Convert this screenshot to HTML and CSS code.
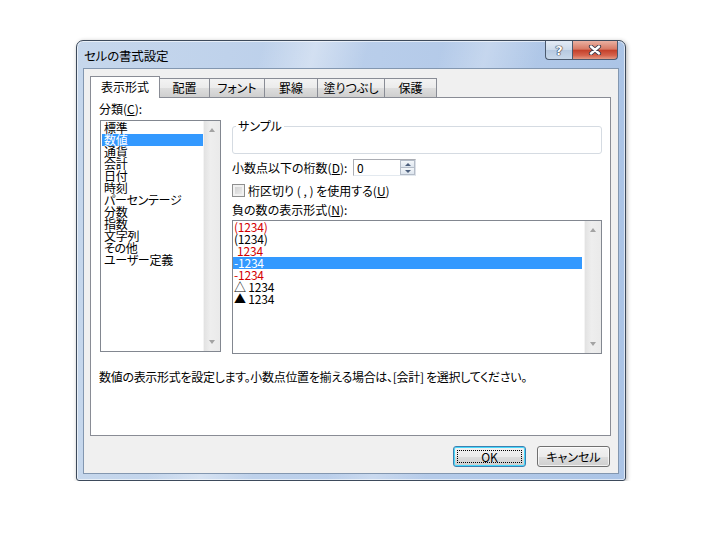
FILE: index.html
```html
<!DOCTYPE html>
<html lang="ja">
<head>
    <meta charset="UTF-8">
    <title>セルの書式設定</title>
    <link rel="stylesheet" href="styles.css">
</head>
<body>
    <div class="window">
        <div class="titlebar">
            <span class="title">セルの書式設定</span>
            <div class="caption-buttons">
                <span class="cap-btn help">?</span>
                <span class="cap-btn close">
                    <svg width="14" height="10" viewBox="0 0 14 10">
                        <path d="M3 1.5 L11 8.5 M11 1.5 L3 8.5" stroke="#3a3a4a" stroke-width="4.2" stroke-linecap="round"/>
                        <path d="M3 1.5 L11 8.5 M11 1.5 L3 8.5" stroke="#fff" stroke-width="2.4" stroke-linecap="round"/>
                    </svg>
                </span>
            </div>
        </div>

        <div class="client">
            <div class="tabs">
                <span class="tab active">表示形式</span>
                <span class="tab">配置</span>
                <span class="tab">フォント</span>
                <span class="tab">罫線</span>
                <span class="tab">塗りつぶし</span>
                <span class="tab">保護</span>
            </div>

            <div class="panel">
                <div class="panel-top">
                    <div class="category">
                        <div class="field-label">分類(<u>C</u>):</div>
                        <div class="listbox cat-list">
                            <ul>
                                <li>標準</li>
                                <li class="selected">数値</li>
                                <li>通貨</li>
                                <li>会計</li>
                                <li>日付</li>
                                <li>時刻</li>
                                <li>パーセンテージ</li>
                                <li>分数</li>
                                <li>指数</li>
                                <li>文字列</li>
                                <li>その他</li>
                                <li>ユーザー定義</li>
                            </ul>
                            <div class="vscroll">
                                <span class="arrow up"></span>
                                <span class="arrow down"></span>
                            </div>
                        </div>
                    </div>

                    <div class="options">
                        <fieldset class="sample">
                            <legend>サンプル</legend>
                        </fieldset>

                        <div class="decimals">
                            <span class="decimals-label">小数点以下の桁数(<u>D</u>):</span>
                            <div class="spin">
                                <span class="spin-value">0</span>
                                <div class="spin-btns">
                                    <span class="spin-btn"><span class="arrow small up"></span></span>
                                    <span class="spin-btn"><span class="arrow small down"></span></span>
                                </div>
                            </div>
                        </div>

                        <div class="check-row">
                            <span class="checkbox"></span>
                            <span>桁区切り ( , ) を使用する(<u>U</u>)</span>
                        </div>

                        <div class="field-label neg-label">負の数の表示形式(<u>N</u>):</div>
                        <div class="listbox neg-list">
                            <ul>
                                <li class="red">(1234)</li>
                                <li>(1234)</li>
                                <li class="red indent">1234</li>
                                <li class="selected">-1234</li>
                                <li class="red">-1234</li>
                                <li>△ 1234</li>
                                <li>▲ 1234</li>
                            </ul>
                            <div class="vscroll">
                                <span class="arrow up"></span>
                                <span class="arrow down"></span>
                            </div>
                        </div>
                    </div>
                </div>

                <p class="description">数値の表示形式を設定します。小数点位置を揃える場合は、[会計] を選択してください。</p>
            </div>

            <div class="buttons">
                <button class="btn default"><span class="focus">OK</span></button>
                <button class="btn">キャンセル</button>
            </div>
        </div>
    </div>
</body>
</html>
```

FILE: styles.css
```css
* {
    margin: 0;
    padding: 0;
    box-sizing: border-box;
}
body {
    background-color: #fff;
    font-family: "Noto Sans CJK JP", sans-serif;
    font-size: 12px;
    color: #000;
    padding: 40px 0 0 76px;
    font-feature-settings: "palt";
}
u {
    text-decoration: underline;
    text-underline-offset: 1px;
}

/* window frame */
.window {
    width: 550px;
    height: 441px;
    border: 1px solid #3d4a5b;
    border-radius: 7px 7px 3px 3px;
    padding: 0 7px 7px;
    display: flex;
    flex-direction: column;
    background:
        linear-gradient(105deg, rgba(255,255,255,0) 28%, rgba(255,255,255,.35) 36%, rgba(255,255,255,0) 44%),
        linear-gradient(105deg, rgba(255,255,255,0) 55%, rgba(255,255,255,.25) 62%, rgba(255,255,255,0) 70%),
        linear-gradient(to right, #c6d7ec, #b8cdea 55%, #abc4e6);
    box-shadow: inset 0 0 0 1px rgba(255,255,255,.6), 1px 1px 4px rgba(0,0,0,.3);
}
.titlebar {
    height: 28px;
    display: flex;
    justify-content: space-between;
    align-items: flex-start;
}
.title {
    font-size: 12.5px;
    line-height: 29px;
    color: #000;
    letter-spacing: -0.2px;
}
.caption-buttons {
    display: flex;
}
.cap-btn {
    height: 19px;
    display: flex;
    align-items: center;
    justify-content: center;
    border: 1px solid #4b5a6e;
    border-top: none;
}
.help {
    width: 27px;
    border-right: none;
    border-radius: 0 0 0 4px;
    background: linear-gradient(#e3ebf5, #ccdaea 50%, #b6c9e0 51%, #c8d8ea);
    color: #fff;
    font-family: "DejaVu Sans", sans-serif;
    font-weight: bold;
    font-size: 13px;
    text-shadow: 0 0 1px #223, 0 0 1px #223, 0 0 1px #223;
}
.close {
    width: 46px;
    border-radius: 0 0 4px 0;
    background: linear-gradient(#eab1a2, #d77a65 45%, #c4412b 52%, #d5634c 80%, #e39a84);
}

/* client area */
.client {
    flex: 1;
    background-color: #f0f0f0;
    box-shadow: 0 0 0 1px #8397b0;
    padding: 7px 7px 0 6px;
    display: flex;
    flex-direction: column;
}
.tabs {
    display: flex;
    align-items: flex-end;
    height: 21px;
}
.tab {
    height: 19px;
    border: 1px solid #898c95;
    border-bottom: none;
    margin-left: -1px;
    background: linear-gradient(#f3f3f3, #ebebeb 50%, #dddddd 51%, #cfcfcf);
    display: flex;
    align-items: center;
    justify-content: center;
    line-height: 12px;
}
.tab.active {
    height: 22px;
    margin-left: 0;
    margin-bottom: -1px;
    background: #fff;
    position: relative;
    z-index: 1;
    padding-bottom: 2px;
}
.tab:nth-child(1) { width: 70px; }
.tab:nth-child(2) { width: 51px; }
.tab:nth-child(3) { width: 56px; }
.tab:nth-child(4) { width: 54px; }
.tab:nth-child(5) { width: 68px; }
.tab:nth-child(6) { width: 53px; }

.panel {
    height: 339px;
    background-color: #fff;
    border: 1px solid #898c95;
    padding: 5px 8px 0 8px;
}
.panel-top {
    display: flex;
    gap: 11px;
}
.field-label {
    line-height: 12px;
    height: 12px;
}
.category {
    width: 122px;
}

/* list boxes */
.listbox {
    border: 1px solid #828790;
    display: flex;
    background: #fff;
}
.listbox ul {
    flex: 1;
    list-style: none;
}
.listbox li {
    height: 12px;
    line-height: 12px;
    white-space: pre;
}
.listbox li.selected {
    background-color: #3399ff;
    color: #fff;
}
.cat-list {
    margin: 5px 0 0 1px;
    height: 232px;
}
.cat-list ul {
    padding: 1px 0 0 1px;
}
.cat-list li {
    padding-left: 2px;
    letter-spacing: -0.3px;
}
.neg-list {
    margin-top: 4px;
    height: 134px;
}
.neg-list ul {
    padding-right: 2px;
}
.neg-list li {
    padding-left: 1px;
    letter-spacing: -0.2px;
}
.neg-list li.red {
    color: #d40000;
}
.neg-list li.indent {
    padding-left: 4px;
}
.vscroll {
    width: 17px;
    background: linear-gradient(to right, #e2e2e2, #eeeeee 40%, #eaeaea);
    border-left: 1px solid #f4f4f4;
    display: flex;
    flex-direction: column;
    justify-content: space-between;
    align-items: center;
    padding: 7px 0;
}
.arrow {
    width: 0;
    height: 0;
    border-left: 3.5px solid transparent;
    border-right: 3.5px solid transparent;
}
.arrow.up {
    border-bottom: 4px solid #a3a3a3;
}
.arrow.down {
    border-top: 4px solid #a3a3a3;
}

/* right side options */
.options {
    flex: 1;
    padding-top: 17px;
}
.sample {
    height: 34px;
    border: 1px solid #d5dbe2;
    border-radius: 3px;
}
.sample legend {
    margin-left: 3px;
    padding: 0 2px;
    line-height: 12px;
}
.decimals {
    display: flex;
    align-items: center;
    margin-top: 5px;
    height: 17px;
}
.decimals-label {
    width: 121px;
}
.spin {
    width: 63px;
    height: 17px;
    border: 1px solid #abadb3;
    border-right-color: #dbdfe6;
    border-bottom-color: #e3e9ef;
    display: flex;
    justify-content: space-between;
}
.spin-value {
    padding-left: 3px;
    line-height: 15px;
}
.spin-btns {
    width: 15px;
    display: flex;
    flex-direction: column;
}
.spin-btn {
    flex: 1;
    border: 1px solid #b4bcc8;
    background: linear-gradient(#f4f7fa, #dde5ee);
    display: flex;
    align-items: center;
    justify-content: center;
}
.spin-btn + .spin-btn {
    border-top: none;
}
.arrow.small.up {
    border-bottom-color: #4c5f7d;
    border-bottom-width: 3px;
}
.arrow.small.down {
    border-top-color: #4c5f7d;
    border-top-width: 3px;
}
.check-row {
    display: flex;
    align-items: center;
    gap: 3px;
    margin-top: 8px;
    height: 13px;
    line-height: 12px;
}
.checkbox {
    width: 13px;
    height: 13px;
    border: 1px solid #8e8f8f;
    background: linear-gradient(135deg, #cbcbcb, #f2f2f2);
    box-shadow: inset 0 0 0 2px #f1f1f1;
}
.neg-label {
    margin-top: 7px;
}
.description {
    margin-top: 17px;
    line-height: 12px;
    letter-spacing: -0.3px;
}

/* bottom buttons */
.buttons {
    display: flex;
    justify-content: flex-end;
    gap: 11px;
    margin-top: 10px;
    padding-right: 1px;
}
.btn {
    width: 73px;
    height: 21px;
    border: 1px solid #707070;
    border-radius: 3px;
    background: linear-gradient(#f2f2f2, #ebebeb 50%, #dddddd 51%, #cfcfcf);
    font-family: "Noto Sans CJK JP", sans-serif;
    font-size: 12px;
    font-feature-settings: "palt";
    color: #000;
    display: flex;
    align-items: center;
    justify-content: center;
    box-shadow: inset 0 0 0 1px rgba(255,255,255,.7);
}
.btn.default {
    border-color: #3c7fb1;
    box-shadow: inset 0 0 0 1px #48d8fb;
    padding: 3px;
}
.focus {
    flex: 1;
    align-self: stretch;
    border: 1px dotted #000;
    display: flex;
    align-items: center;
    justify-content: center;
    line-height: 12px;
}
```
